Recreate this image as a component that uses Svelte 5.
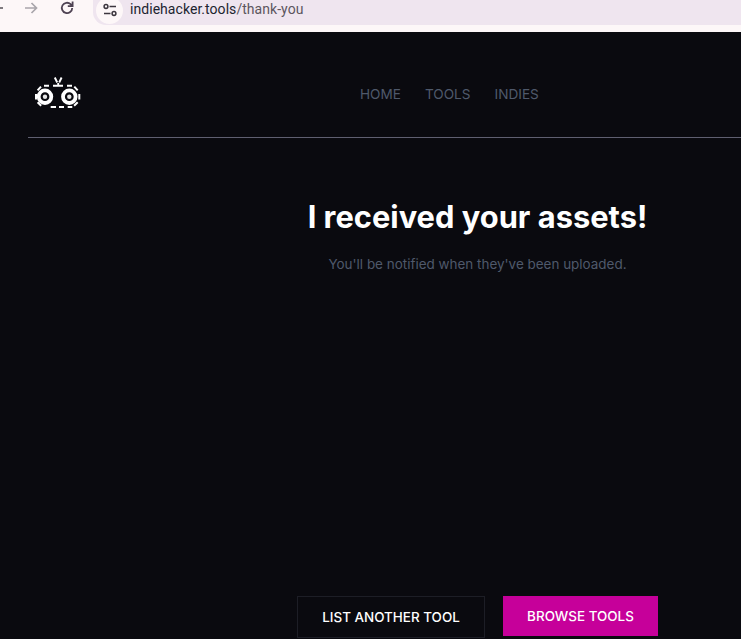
<script>
  const links = ['HOME', 'TOOLS', 'INDIES'];
</script>

<div class="shot">
  <div class="chrome">
    <svg class="back" width="6" height="16" viewBox="0 0 6 16"><path d="M0 8h3" stroke="#5f5a61" stroke-width="1.6" fill="none"/></svg>
    <svg class="fwd" width="16" height="16" viewBox="0 0 16 16"><path d="M2 8h11.5M8.5 3l5 5-5 5" stroke="#a9a5ab" stroke-width="1.7" fill="none"/></svg>
    <svg class="reload" width="16" height="16" viewBox="0 0 16 16"><path d="M13.2 8a5.2 5.2 0 1 1-1.6-3.8L13.4 6M13.6 1.4V6.2H8.8" stroke="#4f4353" stroke-width="1.8" fill="none"/></svg>
    <div class="omnibox">
      <span class="tune">
        <svg width="14" height="14" viewBox="0 0 14 14"><g stroke="#3c363e" stroke-width="1.5" fill="none"><circle cx="3" cy="3.5" r="1.9"/><path d="M6.5 3.5H13M1 10.5h6.5"/><circle cx="11" cy="10.5" r="1.9"/></g></svg>
      </span>
      <span class="url">indiehacker.tools<span class="path">/thank-you</span></span>
    </div>
  </div>

  <div class="page">
    <header>
      <svg class="logo" width="48" height="33" viewBox="0 0 48 33">
        <path d="M20.8 1.5l2.4 5M27.6 1.5l-2.4 5M24.2 7v2" stroke="#fff" stroke-width="1.9" fill="none"/>
        <path d="M10 9.7h5M19 9.7h10M33 9.7h5M16.7 31h5.3M25 31h5M33.7 31h4.6M2 18v5.4M45.3 18v5.4M3.6 14.4l3.4-3.8M43.7 14.4l-3.4-3.8M3.6 26.2l3.6 3.6M43.7 26.2l-3.6 3.6" stroke="#fff" stroke-width="2" fill="none"/>
        <circle cx="11" cy="20.7" r="6.3" fill="none" stroke="#fff" stroke-width="3.8"/>
        <circle cx="11" cy="20.7" r="2.2" fill="#e6e6e6"/>
        <circle cx="35.3" cy="20.7" r="6.3" fill="none" stroke="#fff" stroke-width="3.8"/>
        <circle cx="35.3" cy="20.7" r="2.2" fill="#e6e6e6"/>
      </svg>
      <nav>
        {#each links as link}
          <a href="#top">{link}</a>
        {/each}
      </nav>
    </header>

    <main>
      <h1>I received your assets!</h1>
      <p>You'll be notified when they've been uploaded.</p>
      <div class="actions">
        <a class="btn ghost" href="#top">LIST ANOTHER TOOL</a>
        <a class="btn primary" href="#top">BROWSE TOOLS</a>
      </div>
    </main>
  </div>
</div>

<style>
  :global(body) { margin: 0; background: #0a0a0f; }
  .shot { width: 741px; height: 639px; overflow: hidden; display: flex; flex-direction: column; font-family: Inter, sans-serif; }
  .chrome { height: 32px; flex: none; box-sizing: border-box; background: #fdf7f8; display: flex; align-items: flex-start; }
  .back { flex: none; }
  .fwd { margin-left: 17px; flex: none; }
  .reload { margin-left: 20px; flex: none; }
  .omnibox { margin-left: 18px; flex: 1; height: 25px; background: #efe5ef; border-radius: 0 0 0 13px; display: flex; align-items: center; }
  .tune { width: 27px; height: 27px; margin: -5px 0 0 3px; border-radius: 50%; background: #fdf7f8; display: flex; align-items: center; justify-content: center; }
  .url { font-family: Roboto, sans-serif; font-size: 14px; letter-spacing: 0.05px; color: #1c2430; margin: -7px 0 0 7px; }
  .path { color: #5c565e; }
  .page { flex: 1; background: #0a0a0f; display: flex; flex-direction: column; }
  header { margin-left: 28px; height: 106px; box-sizing: border-box; border-bottom: 1px solid #5f5f70; display: flex; align-items: flex-start; }
  .logo { margin: 44px 0 0 6px; flex: none; }
  nav { display: flex; gap: 24px; margin: 54px 0 0 278px; }
  nav a { font-size: 13.6px; line-height: 17px; color: #4f596b; text-decoration: none; }
  main { margin-left: 214px; display: flex; flex-direction: column; align-items: center; }
  h1 { margin: 61px 0 0; font-size: 30.85px; line-height: 36px; font-weight: 700; color: #fff; white-space: nowrap; }
  p { margin: 21px 0 0; font-size: 13.46px; line-height: 17px; color: #4f596b; }
  .actions { display: flex; gap: 18px; margin-top: 323px; align-items: flex-start; }
  .btn { box-sizing: border-box; height: 42px; font-size: 13.45px; font-weight: 500; color: #fff; text-decoration: none; display: flex; align-items: center; justify-content: center; }
  .ghost { width: 188px; border: 1px solid #1d1e26; }
  .primary { width: 155px; height: 40px; background: #c6009a; }
</style>
